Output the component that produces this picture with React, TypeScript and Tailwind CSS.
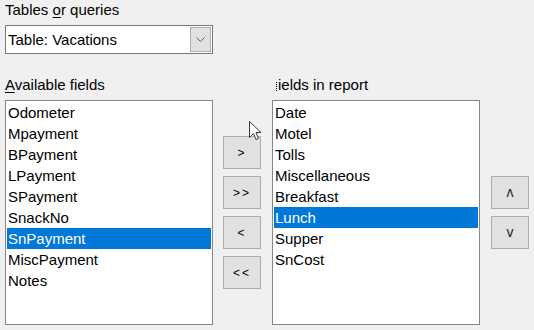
import React from 'react';

const availableFields = ['Odometer', 'Mpayment', 'BPayment', 'LPayment', 'SPayment', 'SnackNo', 'SnPayment', 'MiscPayment', 'Notes'];
const reportFields = ['Date', 'Motel', 'Tolls', 'Miscellaneous', 'Breakfast', 'Lunch', 'Supper', 'SnCost'];

const FieldList: React.FC<{ items: string[]; selected: string }> = ({ items, selected }) => (
    <div className="w-[208px] h-[225px] bg-white border border-[#828790] p-[1px] flex flex-col">
        {items.map(item => (
            <div
                key={item}
                className={
                    item === selected
                        ? 'h-[21px] leading-[21px] px-[1px] bg-[#0078d7] text-white'
                        : 'h-[21px] leading-[21px] px-[1px] text-black'
                }
            >
                {item}
            </div>
        ))}
    </div>
);

const MoveButton: React.FC<{ label: string; big?: boolean }> = ({ label, big }) => (
    <button
        className={
            big
                ? 'w-[38px] h-[33px] bg-[#e1e1e1] border border-[#adadad] text-[14px] font-light text-[#222] flex items-center justify-center'
                : 'w-[38px] h-[33px] bg-[#e1e1e1] border border-[#adadad] text-[12px] text-black flex items-center justify-center tracking-[2px]'
        }
    >
        {label}
    </button>
);

const App: React.FC = () => {
    return (
        <div
            className="relative w-[534px] h-[330px] bg-[#f0f0f0] text-[15px] text-black overflow-hidden"
            style={{ fontFamily: '"Liberation Sans", Arial, sans-serif' }}
        >
            <div className="pl-[5px] h-[20px] leading-[20px]">
                Tables <span className="underline underline-offset-2">o</span>r queries
            </div>

            <div className="ml-[5px] mt-[5px] w-[208px] h-[29px] bg-white border border-[#7a7a7a] flex items-center justify-between pl-[2px] pr-[1px]">
                <span className="mt-[1px]">Table: Vacations</span>
                <div className="w-[21px] h-[25px] bg-[#e1e1e1] border border-[#adadad] flex items-center justify-center">
                    <svg width="9" height="5" viewBox="0 0 9 5" fill="none">
                        <path d="M0.5 0.5 L4.5 4.5 L8.5 0.5" stroke="#606060" strokeWidth="1" />
                    </svg>
                </div>
            </div>

            <div className="mt-[21px] h-[20px] leading-[20px] flex">
                <div className="pl-[5px] w-[276px]">
                    <span className="underline underline-offset-2">A</span>vailable fields
                </div>
                <div className="flex items-center">
                    <span className="inline-block w-[1px] h-[9px] border-l border-dotted border-black mr-[1px] mt-[3px]" />
                    ields in report
                </div>
            </div>

            <div className="mt-[5px] pl-[5px] flex">
                <FieldList items={availableFields} selected="SnPayment" />
                <div className="ml-[10px] pt-[36px] flex flex-col gap-[7px]">
                    <MoveButton label=">" />
                    <MoveButton label=">>" />
                    <MoveButton label="<" />
                    <MoveButton label="<<" />
                </div>
                <div className="ml-[11px]">
                    <FieldList items={reportFields} selected="Lunch" />
                </div>
                <div className="ml-[11px] pt-[76px] flex flex-col gap-[7px]">
                    <MoveButton label="ʌ" big />
                    <MoveButton label="v" big />
                </div>
            </div>

            <svg className="absolute left-[249px] top-[121px]" width="13" height="21" viewBox="0 0 13 21">
                <path d="M0.5 0.5 L0.5 16.5 L4.5 12.5 L7 18.5 L9.5 17.5 L7 11.5 L12 11.5 Z" fill="white" stroke="#3a3a3a" strokeWidth="1" strokeLinejoin="round" />
            </svg>
        </div>
    );
};

export default App;
